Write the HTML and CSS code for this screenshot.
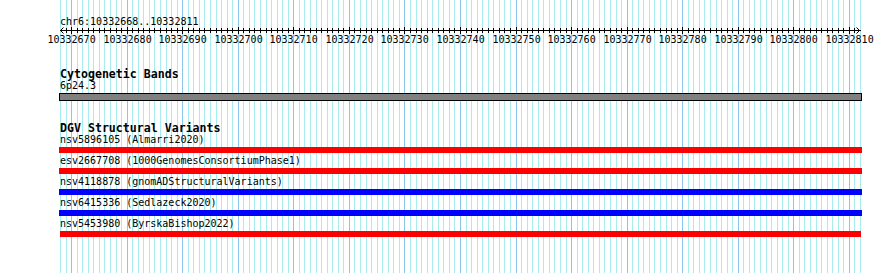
FILE: index.html
```html
<!DOCTYPE html>
<html lang="en">
<head>
	<meta charset="UTF-8">
	<title>chr6:10332668..10332811</title>
	<link rel="stylesheet" href="styles.css">
</head>
<body>
	<div class="panel">
		<!-- grid lines, one per base, filled in by the script below -->
		<svg class="grid" id="grid" width="890" height="273"></svg>

		<div class="content">
			<div class="locus">chr6:10332668..10332811</div>
			<svg class="ruler" width="890" height="19">
				<line class="axis" x1="60" y1="2.5" x2="861" y2="2.5"/>
				<path class="arrow" d="M63.5 -0.5 L60.5 2.5 L63.5 5.5 M856.5 -0.5 L859.5 2.5 L856.5 5.5"/>
				<g id="ticks"></g>
				<g class="numbers">
					<text x="71.6" y="15">10332670</text>
					<text x="127.6" y="15">10332680</text>
					<text x="182.6" y="15">10332690</text>
					<text x="238.6" y="15">10332700</text>
					<text x="293.6" y="15">10332710</text>
					<text x="349.6" y="15">10332720</text>
					<text x="404.6" y="15">10332730</text>
					<text x="460.6" y="15">10332740</text>
					<text x="516.6" y="15">10332750</text>
					<text x="571.6" y="15">10332760</text>
					<text x="627.6" y="15">10332770</text>
					<text x="682.6" y="15">10332780</text>
					<text x="738.6" y="15">10332790</text>
					<text x="793.6" y="15">10332800</text>
					<text x="849.6" y="15">10332810</text>
				</g>
			</svg>

			<div class="track">
				<div class="track-title">Cytogenetic Bands</div>
				<div class="feature">
					<div class="feature-label">6p24.3</div>
					<div class="band"></div>
				</div>
			</div>

			<div class="track">
				<div class="track-title">DGV Structural Variants</div>
				<div class="feature">
					<div class="feature-label">nsv5896105 (Almarri2020)</div>
					<div class="bar red"></div>
				</div>
				<div class="feature">
					<div class="feature-label">esv2667708 (1000GenomesConsortiumPhase1)</div>
					<div class="bar red"></div>
				</div>
				<div class="feature">
					<div class="feature-label">nsv4118878 (gnomADStructuralVariants)</div>
					<div class="bar blue"></div>
				</div>
				<div class="feature">
					<div class="feature-label">nsv6415336 (Sedlazeck2020)</div>
					<div class="bar blue"></div>
				</div>
				<div class="feature">
					<div class="feature-label">nsv5453980 (ByrskaBishop2022)</div>
					<div class="bar red last"></div>
				</div>
			</div>
		</div>
	</div>

	<script type="text/javascript">
	// 144 bases drawn over 800px starting at x=60
	var start = 10332668;
	var bases = 144;
	var left = 60;
	var scale = 800 / bases;
	var ns = 'http://www.w3.org/2000/svg';
	var grid = document.getElementById('grid');
	var ticks = document.getElementById('ticks');

	for (var i = 0; i <= bases; i++) {
		var x = Math.round(left + i * scale) + 0.5;
		var major = (start + i) % 10 === 0;
		//grid line
		var line = document.createElementNS(ns, 'line');
		line.setAttribute('x1', x);
		line.setAttribute('x2', x);
		line.setAttribute('y1', 0);
		line.setAttribute('y2', 273);
		line.setAttribute('class', major ? 'major' : 'minor');
		grid.appendChild(line);
		//ruler tick
		if (i > 0 && i < bases) {
			var tick = document.createElementNS(ns, 'line');
			tick.setAttribute('x1', x);
			tick.setAttribute('x2', x);
			tick.setAttribute('y1', major ? -1 : 0);
			tick.setAttribute('y2', major ? 6 : 5);
			ticks.appendChild(tick);
		}
	}
	</script>
</body>
</html>
```

FILE: styles.css
```css
body {
	margin: 0;
	background-color: #fff;
}
.panel {
	position: relative;
	width: 890px;
	height: 273px;
	overflow: hidden;
	color: #000;
	font-family: "DejaVu Sans Mono", monospace;
}
.grid {
	position: absolute;
	top: 0;
	left: 0;
	shape-rendering: crispEdges;
}
.grid .minor {
	stroke: #a8ecf0;
	stroke-width: 1;
}
.grid .major {
	stroke: #8cc6ee;
	stroke-width: 1;
}
.content {
	position: relative;
}
.locus {
	padding: 16px 0 0 60px;
	font-size: 10px;
	line-height: 12px;
}
.ruler {
	display: block;
	overflow: visible;
}
.ruler .axis,
.ruler #ticks line {
	stroke: #000;
	stroke-width: 1;
	shape-rendering: crispEdges;
}
.ruler .arrow {
	fill: none;
	stroke: #000;
	stroke-width: 1;
}
.ruler text {
	font-family: "DejaVu Sans Mono", monospace;
	font-size: 10px;
	text-anchor: middle;
	fill: #000;
}
.track {
	margin-top: 21px;
}
.track-title {
	padding-left: 60px;
	font-size: 11.6px;
	font-weight: bold;
	line-height: 12px;
}
.feature + .feature {
	margin-top: 2px;
}
.feature-label {
	padding-left: 60px;
	font-size: 10px;
	line-height: 12px;
}
.band {
	box-sizing: border-box;
	margin: 1px 0 0 59px;
	width: 803px;
	height: 8px;
	border: 1px solid #000;
	background-color: #808080;
}
.bar {
	margin: 1px 0 0 59px;
	width: 803px;
	height: 6px;
}
.red {
	background-color: #ff0000;
}
.blue {
	background-color: #0000ff;
}
.last {
	margin-left: 60px;
	width: 801px;
}
```
